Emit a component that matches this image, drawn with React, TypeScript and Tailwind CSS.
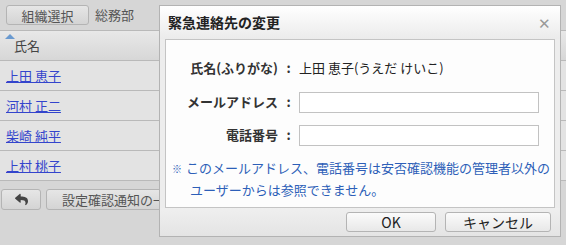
import { FaReply } from "react-icons/fa";

const members = ["上田 恵子", "河村 正二", "柴崎 純平", "上村 桃子"];

const jp = { fontFamily: '"Noto Sans CJK JP", "Noto Sans", sans-serif' };

function Field({ label, children }: { label: string; children: React.ReactNode }) {
  return (
    <div className="flex items-center h-[20px]">
      <div className="w-[112px] text-right font-bold text-[#333]">{label}</div>
      <div className="w-[21px] text-center font-bold text-[#333]">:</div>
      <div className="flex-1 pr-[15px]">{children}</div>
    </div>
  );
}

export default function App() {
  return (
    <div className="relative w-[566px] h-[245px] overflow-hidden bg-[#d6d6d6] text-[13px] text-[#333]" style={jp}>
      {/* page behind */}
      <div className="flex items-center gap-[6px] h-[30px] px-[6px]">
        <button className="h-[20px] w-[83px] rounded-[3px] border border-[#b4b4b4] bg-gradient-to-b from-[#e6e6e6] to-[#d4d4d4] text-[#555]">
          組織選択
        </button>
        <span className="text-[#555]">総務部</span>
      </div>
      <div className="border-t border-[#b9b9b9] w-[566px]">
        <div className="relative h-[30px] flex items-center pl-[14px] bg-gradient-to-b from-[#e8e8e8] to-[#d7d7d7] border-b border-[#b9b9b9] text-[#444]">
          <span className="absolute left-[5px] top-[3px] w-0 h-0 border-l-[5px] border-r-[5px] border-b-[5px] border-l-transparent border-r-transparent border-b-[#6a9ad0]" />
          氏名
        </div>
        {members.map((m) => (
          <div key={m} className="h-[30px] flex items-center pl-[6px] bg-[#e3e3e3] border-b border-[#b9b9b9]">
            <a className="text-[#3344cc] underline">{m}</a>
          </div>
        ))}
      </div>
      <div className="flex gap-[5px] pl-[1px] pt-[8px]">
        <button className="h-[21px] w-[40px] rounded-[3px] border border-[#b4b4b4] bg-gradient-to-b from-[#e6e6e6] to-[#d4d4d4] flex items-center justify-center">
          <FaReply size={13} className="text-[#444]" />
        </button>
        <button className="h-[21px] w-[160px] rounded-[3px] border border-[#b4b4b4] bg-gradient-to-b from-[#e6e6e6] to-[#d4d4d4] text-[#555] text-left pl-[15px]">
          設定確認通知の一括送信
        </button>
      </div>

      {/* dialog */}
      <div className="absolute left-[159px] top-[5px] w-[402px] h-[232px] border border-[#b3b3b3] bg-[#ededed] flex flex-col">
        <div className="h-[33px] flex items-center justify-between px-[8px] bg-gradient-to-b from-[#ffffff] to-[#ebebeb]">
          <span className="font-bold text-[14px] text-[#222]">緊急連絡先の変更</span>
          <span className="text-[#9a9a9a] text-[15px] leading-none mr-[1px]">✕</span>
        </div>
        <div className="mx-[5px] h-[169px] border border-[#c4c4c4] bg-[#fdfdfd] flex flex-col pt-[18px]">
          <Field label="氏名(ふりがな)">
            <span className="text-[#222]">上田 恵子(うえだ けいこ)</span>
          </Field>
          <div className="h-[14px]" />
          <Field label="メールアドレス">
            <div className="h-[21px] w-[240px] border border-[#c2c2c2] bg-white" />
          </Field>
          <div className="h-[13px]" />
          <Field label="電話番号">
            <div className="h-[21px] w-[240px] border border-[#c2c2c2] bg-white" />
          </Field>
          <div className="mt-[12px] pl-[6px] text-[#2d5fb8] leading-[21px]">
            <div>
              <span className="text-[10px] mr-[4px]">※</span>このメールアドレス、電話番号は安否確認機能の管理者以外の
            </div>
            <div className="pl-[18px]">ユーザーからは参照できません。</div>
          </div>
        </div>
        <div className="flex-1 flex items-center justify-end gap-[9px] pr-[9px] bg-gradient-to-b from-[#efefef] to-[#e4e4e4]">
          <button className="h-[20px] w-[90px] rounded-[3px] border border-[#b4b4b4] bg-gradient-to-b from-[#fbfbfb] to-[#e8e8e8] text-[#222] text-[14px] leading-none">
            OK
          </button>
          <button className="h-[20px] w-[106px] rounded-[3px] border border-[#b4b4b4] bg-gradient-to-b from-[#fbfbfb] to-[#e8e8e8] text-[#222] text-[14px] leading-none">
            キャンセル
          </button>
        </div>
      </div>
    </div>
  );
}
